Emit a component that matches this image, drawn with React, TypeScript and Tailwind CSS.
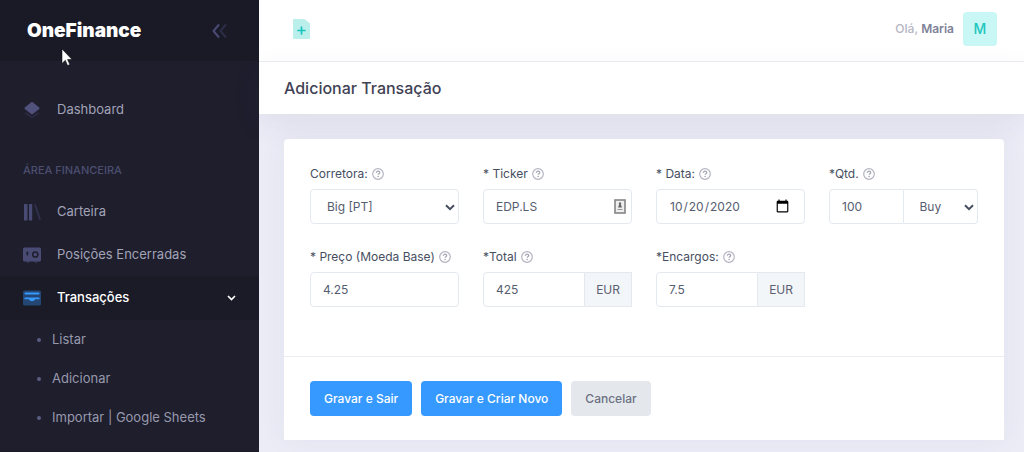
import { useState } from 'react';
import type { ReactNode } from 'react';

const inputClass =
  'h-[35px] min-w-0 border border-[#e4e8ef] bg-white text-xs text-[#565d70] outline-none focus:border-[#3699ff]';

const subItems = ['Listar', 'Adicionar', 'Importar | Google Sheets'];

function LayersIcon() {
  return (
    <svg width="18" height="18" viewBox="0 0 18 18" aria-hidden="true">
      <path d="M2.500 12 9 16.300l6.500-4.300" fill="none" stroke="#494b74" strokeOpacity="0.35" strokeWidth="1.500" />
      <path d="M8.200 1.300a1.300 1.300 0 0 1 1.600 0l6.400 5.200a1 1 0 0 1 0 1.500l-6.400 5a1.300 1.300 0 0 1-1.600 0L1.800 8a1 1 0 0 1 0-1.500z" fill="#50527d" />
    </svg>
  );
}

function LibraryIcon() {
  return (
    <svg width="18" height="18" viewBox="0 0 18 18" aria-hidden="true">
      <rect x="1" y="1" width="3.500" height="16.500" rx="0.500" fill="#494b74" />
      <rect x="6" y="1" width="3.200" height="16.500" rx="0.500" fill="#494b74" />
      <path d="M11 1.800 12.800 1l5.200 15.500-1.800.8z" fill="#494b74" fillOpacity="0.4" />
    </svg>
  );
}

function SafeIcon() {
  return (
    <svg width="18" height="18" viewBox="0 0 18 18" aria-hidden="true">
      <path d="M3 15h4l-1 2H4zM11 15h4l-1 2h-2z" fill="#494b74" fillOpacity="0.4" />
      <rect x="0" y="1.500" width="18" height="14" rx="1.500" fill="#494b74" />
      <rect x="3.500" y="5.500" width="1.700" height="4" rx="0.800" fill="#1e1e2d" />
      <circle cx="12.300" cy="8.500" r="2.600" fill="none" stroke="#1e1e2d" strokeWidth="1.500" />
    </svg>
  );
}

function InboxIcon() {
  return (
    <svg width="18" height="18" viewBox="0 0 18 18" aria-hidden="true">
      <rect x="0" y="1.500" width="18" height="15" rx="1.500" fill="#3699ff" fillOpacity="0.35" />
      <rect x="1.500" y="3.500" width="15" height="2" rx="1" fill="#3699ff" />
      <path d="M2.300 8.500h13.400a.9.900 0 0 1 0 1.800h-3.200c-.5 0-.7.300-1 .8-.5.700-1.100 1.200-2.500 1.200s-2-.5-2.500-1.200c-.3-.5-.5-.8-1-.8H2.300a.9.900 0 0 1 0-1.800z" fill="#3699ff" />
    </svg>
  );
}

function HelpIcon() {
  return (
    <svg width="12" height="12" viewBox="0 0 12 12" className="shrink-0" aria-hidden="true">
      <circle cx="6" cy="6" r="5.300" fill="none" stroke="#b5b5c3" strokeWidth="1.200" />
      <path d="M4.400 4.800c0-1 .7-1.600 1.600-1.600s1.700.6 1.700 1.500c0 1.100-1.600 1.100-1.600 2.100" fill="none" stroke="#a5a5b5" strokeWidth="1.300" />
      <circle cx="6.100" cy="8.500" r="0.800" fill="#a5a5b5" />
    </svg>
  );
}

function Chevron() {
  return (
    <svg width="10" height="7" viewBox="0 0 10 7" className="pointer-events-none absolute right-1 top-[15px]" aria-hidden="true">
      <path d="M1 1.200 5 5.200l4-4" fill="none" stroke="#464e5f" strokeWidth="2" />
    </svg>
  );
}

function MenuItem({ icon, label }: { icon: ReactNode; label: string }) {
  return (
    <a href="#" className="flex h-[43px] items-center gap-4 px-[23px] text-[#a2a3b7] hover:bg-[#1b1b28]">
      {icon}
      {label}
    </a>
  );
}

function Field({ id, label, children }: { id: string; label: string; children: ReactNode }) {
  return (
    <div>
      <label htmlFor={id} className="mb-[5px] flex h-5 items-center gap-1 whitespace-nowrap text-xs text-[#464e5f]">
        {label} <HelpIcon />
      </label>
      {children}
    </div>
  );
}

function Currency() {
  return (
    <span className="flex items-center border border-l-0 border-[#e4e8ef] bg-[#f3f6f9] px-[11px] text-xs text-[#5a6070]">
      EUR
    </span>
  );
}

function Sidebar() {
  const [open, setOpen] = useState(true);

  return (
    <aside className="w-[259px] shrink-0 border-b border-[#1a1a27] bg-[#1e1e2d] text-[13px]">
      <div className="relative flex h-[61px] items-center justify-between bg-[#1a1a27] pl-[27px] pr-8">
        <a href="#" className="text-[19px] leading-6 font-black text-white">OneFinance</a>
        <button type="button" aria-label="Menu">
          <svg width="15" height="16" viewBox="0 0 15 16" fill="none" strokeWidth="2">
            <path d="M7 1.500 1.500 8 7 14.500" stroke="#494b74" />
            <path d="M14 1.500 8.500 8l5.500 6.500" stroke="#494b74" strokeOpacity="0.4" />
          </svg>
        </button>
        {/* mouse pointer */}
        <svg width="12" height="19" viewBox="0 0 12 19" className="absolute left-[61px] top-12" aria-hidden="true">
          <path d="M1 1v14.500l3.300-3.200 2.300 5.300 2.200-1-2.300-5.100H11z" fill="#fff" stroke="#000" strokeWidth="0.500" />
        </svg>
      </div>

      <nav className="pt-[27px]">
        <MenuItem icon={<LayersIcon />} label="Dashboard" />
        <h4 className="mt-[19px] flex h-10 items-center px-[23px] text-[11px] font-medium uppercase text-[#4c4e6f]">
          Área Financeira
        </h4>
        <MenuItem icon={<LibraryIcon />} label="Carteira" />
        <MenuItem icon={<SafeIcon />} label="Posições Encerradas" />
        <button
          type="button"
          onClick={() => setOpen(!open)}
          className="flex h-11 w-full items-center gap-4 bg-[#1b1b28] px-[23px] font-medium text-white"
        >
          <InboxIcon />
          Transações
          <svg width="9" height="6" viewBox="0 0 9 6" className="ml-auto" aria-hidden="true">
            <path d="M1 1l3.500 3.500L8 1" fill="none" stroke="#fff" strokeWidth="1.700" />
          </svg>
        </button>
        {open && (
          <ul>
            {subItems.map((item) => (
              <li key={item}>
                <a href="#" className="flex h-[39px] items-center gap-[11px] pl-[37px] text-[#9899ac]">
                  <span className="size-1 rounded-full bg-[#5c5e81]" />
                  {item}
                </a>
              </li>
            ))}
          </ul>
        )}
      </nav>
    </aside>
  );
}

export default function App() {
  return (
    <div className="flex min-h-screen bg-[#ebecf6] font-['Inter','Liberation_Sans',sans-serif]">
      <Sidebar />

      <div className="min-w-0 flex-1">
        <header className="flex h-[62px] items-center justify-between border-b border-[#ebedf3] bg-white pb-1 pl-[34px] pr-[27px]">
          <button type="button" aria-label="Adicionar">
            <svg width="17" height="20" viewBox="0 0 17 20">
              <path d="M1 0h10.500L17 4.500V19a1 1 0 0 1-1 1H1a1 1 0 0 1-1-1V1a1 1 0 0 1 1-1z" fill="#bbefec" />
              <path d="M8.500 8v7M5 11.500h7" stroke="#1bc5bd" strokeWidth="1.700" strokeLinecap="round" />
            </svg>
          </button>
          <div className="flex items-center gap-[9px] text-xs">
            <span className="font-medium text-[#b5b5c3]">
              Olá, <b className="font-semibold text-[#7e8299]">Maria</b>
            </span>
            <span className="flex size-[34px] items-center justify-center rounded bg-[#c9f7f5] text-sm font-medium text-[#1bc5bd]">
              M
            </span>
          </div>
        </header>

        <div className="flex h-[52px] items-center bg-white px-[25px] shadow-[0_10px_30px_0_rgba(82,63,105,0.08)]">
          <h1 className="text-base font-medium text-[#3f4254]">Adicionar Transação</h1>
        </div>

        <main className="pb-3 pl-[25px] pr-5 pt-[25px]">
          <form onSubmit={(e) => e.preventDefault()} className="rounded-t bg-white shadow-[0_0_30px_0_rgba(82,63,105,0.05)]">
            <div className="grid grid-cols-4 gap-x-6 gap-y-[23px] px-[26px] pb-[49px] pt-[25px]">
              <Field id="corretora" label="Corretora:">
                <div className="relative">
                  <select id="corretora" className={`${inputClass} w-full appearance-none rounded pl-4 pr-5`}>
                    <option>Big [PT]</option>
                  </select>
                  <Chevron />
                </div>
              </Field>

              <Field id="ticker" label="* Ticker">
                <div className="relative">
                  <input id="ticker" defaultValue="EDP.LS" className={`${inputClass} w-full rounded px-3`} />
                  <svg width="12" height="15" viewBox="0 0 12 15" className="absolute right-[6px] top-[10px]" aria-hidden="true">
                    <rect x="1" y="1" width="10" height="13" fill="#eee" stroke="#858585" strokeWidth="1.600" />
                    <path d="M6 3.200a1.200 1.200 0 0 1 .8 2.100L8 8.500H4l1.200-3.200A1.200 1.200 0 0 1 6 3.200z" fill="#666" />
                    <path d="M3.500 10.500h5" stroke="#999" />
                  </svg>
                </div>
              </Field>

              <Field id="data" label="* Data:">
                <input
                  id="data"
                  type="date"
                  defaultValue="2020-10-20"
                  className={`${inputClass} w-full rounded px-3 [&::-webkit-calendar-picker-indicator]:size-[15px]`}
                />
              </Field>

              <Field id="qtd" label="*Qtd.">
                <div className="flex">
                  <input id="qtd" defaultValue="100" className={`${inputClass} w-1/2 rounded-l px-3`} />
                  <div className="relative w-1/2">
                    <select aria-label="Tipo" className={`${inputClass} w-full appearance-none rounded-r border-l-0 pl-4 pr-5`}>
                      <option>Buy</option>
                      <option>Sell</option>
                    </select>
                    <Chevron />
                  </div>
                </div>
              </Field>

              <Field id="preco" label="* Preço (Moeda Base)">
                <input id="preco" defaultValue="4.25" className={`${inputClass} w-full rounded px-3`} />
              </Field>

              <Field id="total" label="*Total">
                <div className="flex">
                  <input id="total" defaultValue="425" className={`${inputClass} flex-1 rounded-l px-3`} />
                  <Currency />
                </div>
              </Field>

              <Field id="encargos" label="*Encargos:">
                <div className="flex">
                  <input id="encargos" defaultValue="7.5" className={`${inputClass} flex-1 rounded-l px-3`} />
                  <Currency />
                </div>
              </Field>
            </div>

            <div className="flex gap-[9px] border-t border-[#ebedf3] px-[26px] py-6 text-xs font-medium">
              <button type="submit" className="h-[35px] rounded bg-[#3699ff] px-[14px] text-white">Gravar e Sair</button>
              <button type="submit" className="h-[35px] rounded bg-[#3699ff] px-[14px] text-white">Gravar e Criar Novo</button>
              <button type="button" className="h-[35px] rounded bg-[#e4e8ec] px-[14px] text-[#6c7083]">Cancelar</button>
            </div>
          </form>
        </main>
      </div>
    </div>
  );
}
